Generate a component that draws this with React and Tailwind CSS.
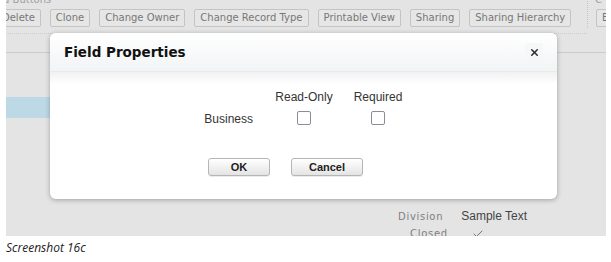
import { Check, X } from "lucide-react";

const ACTIONS = [
  "Delete",
  "Clone",
  "Change Owner",
  "Change Record Type",
  "Printable View",
  "Sharing",
  "Sharing Hierarchy",
];

function ActionButton({ label }) {
  return (
    <span className="h-[18px] px-[5px] flex items-center border border-[#c4c4c4] rounded-[2px] bg-[#e6e6e6] text-[10px] text-[#777] leading-none whitespace-nowrap">
      {label}
    </span>
  );
}

function DialogButton({ label, width }) {
  return (
    <button
      className={`${width} h-[18px] flex items-center justify-center border border-[#b5b5b5] rounded-[3px] bg-gradient-to-b from-white to-[#e4e4e4] text-[11px] font-bold text-[#222] shadow-[0_1px_0_rgba(0,0,0,0.08)]`}
    >
      {label}
    </button>
  );
}

function Checkbox() {
  return <span className="block w-[14px] h-[14px] border-[1.5px] border-[#8c8b98] rounded-[2px] bg-white" />;
}

export default function App() {
  return (
    <div className="w-[611px] h-[262px] bg-white overflow-hidden font-['Liberation_Sans',Arial,sans-serif]">
      <div className="relative ml-[6px] w-[600px] h-[236px] bg-[#e4e4e4] overflow-hidden">
        {/* record detail page behind the dialog */}
        <div className="font-['DejaVu_Sans',Verdana,sans-serif]">
          <div className="flex justify-between -mt-[5px] h-[10px] text-[10px] text-[#a0a0a0] leading-none">
            <span className="-ml-[3px]">d Buttons</span>
            <span className="mr-[4px]">C</span>
          </div>
          <div className="flex items-center h-[20px] mt-[3px]">
            <div className="flex shrink-0 gap-[9px] -ml-[10px] w-[591px]">
              {ACTIONS.map((a) => (
                <ActionButton key={a} label={a} />
              ))}
            </div>
            <div className="shrink-0 h-[40px] -mt-[20px] border-l border-dotted border-[#c6c6c6]" />
            <div className="shrink-0 ml-[8px]">
              <ActionButton label="Edit" />
            </div>
          </div>
          <div className="mt-[5px] w-[581px] border-t border-dotted border-[#cdcdcd]" />
          <div className="mt-[18px] border-t border-[#cbcbcb]" />
          <div className="mt-[44px] w-[46px] h-[21px] bg-[#bdd9e6]" />
          <div className="mt-[92px] flex items-baseline gap-[18px] pl-[392px] leading-none">
            <span className="text-[10px] tracking-[0.7px] text-[#808080]">Division</span>
            <span className="font-['Liberation_Sans',Arial,sans-serif] text-[12px] text-[#444]">Sample Text</span>
          </div>
          <div className="mt-[6px] flex items-center gap-[24px] pl-[404px] leading-none">
            <span className="text-[10px] tracking-[0.7px] text-[#808080]">Closed</span>
            <Check size={12} strokeWidth={2} className="text-[#777]" />
          </div>
        </div>

        {/* Field Properties dialog */}
        <div className="absolute left-[44px] top-[33px] w-[507px] h-[166px] rounded-[6px] bg-white shadow-[0_1px_5px_rgba(0,0,0,0.3)] overflow-hidden">
          <div className="h-[39px] flex items-center justify-between pl-[14px] pr-[14px] bg-gradient-to-b from-white to-[#f2f4f5] border-b border-[#eaeaea]">
            <span className="text-[13.5px] font-bold text-[#111] font-['DejaVu_Sans',Verdana,sans-serif]">
              Field Properties
            </span>
            <span className="w-[18px] h-[18px] flex items-center justify-center rounded-[2px] bg-[#f6f7f8]">
              <X size={11} strokeWidth={3.5} className="text-[#333]" />
            </span>
          </div>
          <div className="h-[127px] bg-gradient-to-b from-[#f1f1f1] via-white to-white bg-no-repeat [background-size:100%_24px]">
            <div className="pt-[19px] flex">
              <div className="w-[203px] pt-[22px] text-right text-[12px] text-[#333] leading-none">Business</div>
              <div className="ml-[21px] w-[60px] flex flex-col items-center gap-[8px]">
                <span className="text-[12px] text-[#333] leading-none">Read-Only</span>
                <Checkbox />
              </div>
              <div className="ml-[14px] w-[60px] flex flex-col items-center gap-[8px]">
                <span className="text-[12px] text-[#333] leading-none">Required</span>
                <Checkbox />
              </div>
            </div>
            <div className="mt-[33px] flex gap-[21px] pl-[158px]">
              <DialogButton label="OK" width="w-[62px]" />
              <DialogButton label="Cancel" width="w-[72px]" />
            </div>
          </div>
        </div>
      </div>
      <div className="pl-[6px] pt-[6px] text-[12px] italic text-[#222] leading-none font-['Open_Sans',sans-serif]">
        Screenshot 16c
      </div>
    </div>
  );
}
